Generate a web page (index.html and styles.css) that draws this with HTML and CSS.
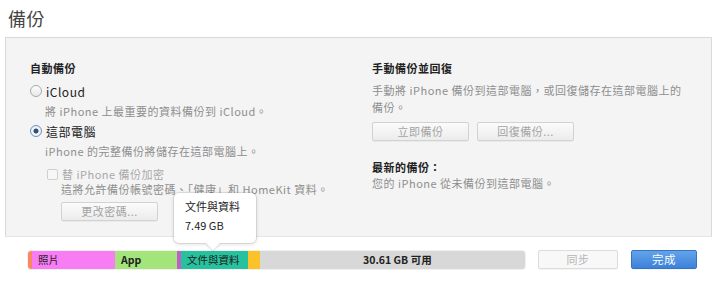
FILE: index.html
```html
<!DOCTYPE html>
<html lang="zh-Hant">
<head>
<meta charset="utf-8">
<link rel="stylesheet" href="styles.css">
</head>
<body>
<h1 class="title">備份</h1>
<section class="panel">
  <div class="col left">
    <div class="head">自動備份</div>
    <div class="opt">
      <span class="radio"></span><span class="lbl">iCloud</span>
    </div>
    <div class="desc ind">將 iPhone 上最重要的資料備份到 iCloud。</div>
    <div class="opt opt2">
      <span class="radio on"></span><span class="lbl">這部電腦</span>
    </div>
    <div class="desc ind d2">iPhone 的完整備份將儲存在這部電腦上。</div>
    <div class="chk-row">
      <span class="chk"></span><span class="chk-lbl">替 iPhone 備份加密</span>
    </div>
    <div class="desc ind2 small">這將允許備份帳號密碼、「健康」和 HomeKit 資料。</div>
    <div class="ind2 btnrow"><button class="btn wide">更改密碼...</button></div>
  </div>
  <div class="col right">
    <div class="head">手動備份並回復</div>
    <div class="desc para">手動將 iPhone 備份到這部電腦，或回復儲存在這部電腦上的備份。</div>
    <div class="btns">
      <button class="btn wide">立即備份</button>
      <button class="btn wide">回復備份...</button>
    </div>
    <div class="head latest">最新的備份：</div>
    <div class="desc last">您的 iPhone 從未備份到這部電腦。</div>
  </div>
</section>
<footer class="footer">
  <div class="bar">
    <span class="seg s-orange" style="width:4px"></span>
    <span class="seg s-pink" style="width:83px">照片</span>
    <span class="seg s-green bold" style="width:62px">App</span>
    <span class="seg s-purple" style="width:4px"></span>
    <span class="seg s-teal" style="width:67px">文件與資料</span>
    <span class="seg s-yellow" style="width:12px"></span>
    <span class="seg s-grey bold">30.61 GB 可用</span>
  </div>
  <button class="btn sync">同步</button>
  <button class="btn done">完成</button>
  <div class="tip">
    <div class="tip-t">文件與資料</div>
    <div class="tip-v">7.49 GB</div>
  </div>
</footer>
</body>
</html>
```
FILE: styles.css
```css
* { box-sizing: border-box; }
html, body { margin: 0; padding: 0; }
body {
  width: 720px; height: 282px; overflow: hidden;
  background: #fff;
  font-family: "Noto Sans CJK TC", "Liberation Sans", sans-serif;
  font-size: 11px; color: #222;
  position: relative;
}
.title {
  margin: 0; padding: 5px 0 0 8px;
  font-size: 18px; font-weight: 400; color: #444; line-height: 26px; height: 37px;
  letter-spacing: 0.5px;
}
.panel {
  margin: 0 8px 0 5px;
  height: 200px;
  background: #f4f4f4;
  border: 1px solid #d9d9d9;
  border-bottom-color: #e6e6e6;
  display: grid;
  grid-template-columns: 342px 1fr;
  padding: 22px 0 0 24px;
  letter-spacing: 0.5px;
}
.head { font-weight: 700; color: #222; line-height: 16px; height: 16px; }
.opt { display: flex; align-items: center; height: 16px; margin-top: 7px; }
.opt2 { margin-top: 3px; }
.radio {
  width: 12px; height: 12px; border-radius: 50%;
  border: 1px solid #a9a9a9; background: linear-gradient(#fdfdfd,#e8e8e8);
  margin-right: 4px; position: relative; flex: none;
}
.radio.on { border-color: #6f8fb8; background: radial-gradient(circle, #35507a 0 2.2px, #eef3fa 2.8px); }
.lbl { font-size: 12px; color: #222; }
.desc { color: #8e8e8e; line-height: 17px; margin-top: 4px; }
.d2 { margin-top: 4px; }
.ind { padding-left: 15px; }
.ind2 { padding-left: 31px; }
.chk-row { display: flex; align-items: center; padding-left: 17px; margin-top: 7px; height: 14px; }
.chk { width: 11px; height: 11px; border: 1px solid #cfcfcf; background: #f7f7f7; border-radius: 2px; margin-right: 4px; }
.chk-lbl { color: #a8a8a8; }
.small { margin-top: 0; }
.btnrow { margin-top: 4px; }
.btn {
  font-family: inherit; font-size: 11px; color: #a3a3a3; letter-spacing: 0.5px;
  height: 19px; padding: 0; line-height: 17px;
  border: 1px solid #d2d2d2; border-radius: 2px;
  background: linear-gradient(#fbfbfb, #ececec);
  box-shadow: 0 1px 0 rgba(0,0,0,0.04);
}
.wide { width: 97px; }
.right .desc.para { width: 312px; margin-top: 6px; }
.btns { display: flex; gap: 8px; margin-top: 6px; }
.latest { margin-top: 18px; }
.desc.last { margin-top: 0; }
.footer {
  display: flex; align-items: center; height: 45px;
  padding-left: 28px; position: relative;
}
.bar {
  display: flex; width: 497px; height: 18px;
  border-radius: 3px; overflow: hidden;
  box-shadow: 0 0 0 1px rgba(0,0,0,0.06);
}
.seg { display: flex; align-items: center; height: 100%; font-size: 10.5px; color: #222; padding-left: 6px; flex: none; white-space: nowrap; overflow: hidden; }
.s-orange { background: #f7885f; padding: 0; }
.s-pink { background: #f87cf4; }
.s-green { background: #a3e47b; }
.s-purple { background: #c25fc6; padding: 0; }
.s-teal { background: #26c29d; }
.s-yellow { background: #fcc22a; padding: 0; }
.s-grey { background: #d8d8d8; flex: 1; padding-left: 103px; }
.bold { font-weight: 700; }
.sync { width: 80px; margin-left: 13px; color: #b5b5b5; border-color: #dcdcdc; background: #f8f8f8; }
.done {
  width: 66px; margin-left: 13px; color: #fff; border-color: #3673c0;
  background: linear-gradient(#63a3ea, #3c82da); font-size: 11.5px;
}
.tip {
  position: absolute; left: 174px; top: -44px;
  width: 82px; height: 50px;
  background: #fff; border-radius: 5px;
  box-shadow: 0 0 0 1px rgba(0,0,0,0.08), 0 1px 4px rgba(0,0,0,0.15);
  padding: 4px 0 0 11px; color: #222;
}
.tip::after {
  content: ""; position: absolute; left: 34px; bottom: -5px;
  width: 10px; height: 10px; background: #fff; transform: rotate(45deg);
  box-shadow: 1px 1px 2px rgba(0,0,0,0.12);
}
.tip-t { font-size: 11px; line-height: 18px; }
.tip-v { font-size: 11px; line-height: 18px; margin-top: 1px; }
```
